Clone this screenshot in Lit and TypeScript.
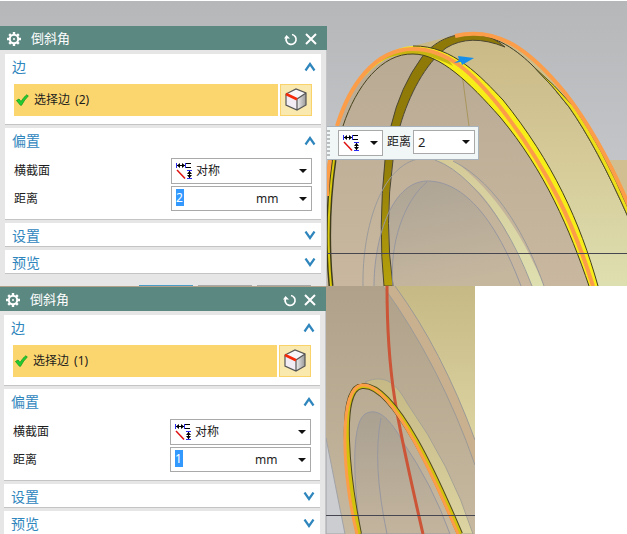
import { LitElement, html, css, svg, nothing } from "lit";
import { customElement, property } from "lit/decorators.js";

const dimensionIcon = html`<svg class="dim" width="17" height="18" viewBox="0 0 17 18" aria-hidden="true">
  <path d="M.5 1v5M9.500 1v5M11 8.500h5M11 16.500h5" stroke="#2a2af0" fill="none"/>
  <path d="M1 3.500h8M10 1.500h5M10 5.500h5M13.500 9v7" stroke="#000" fill="none"/>
  <path d="M1 3.500l3-2.500v5zM9 3.500l-3-2.500v5zM13.500 9l-2.500 3h5zM13.500 16l-2.500-3h5z" fill="#000"/>
  <path d="M1 8l8 8.500" stroke="#e01010" stroke-width="1.500"/>
</svg>`;

const arrow = html`<svg class="arrow" width="8" height="4" viewBox="0 0 8 4" aria-hidden="true">
  <path d="M0 0h8L4 4z" fill="#111"/>
</svg>`;

const shared = css`
  * { box-sizing: border-box; }
  button, select, input { margin: 0; padding: 0; border: 0; background: none; font: inherit; color: inherit; border-radius: 0; }
  select { appearance: none; min-width: 0; }
  svg { display: block; flex: none; }
  .combo { display: flex; align-items: center; border: 1px solid #a9a9a9; background: #fff; }
  .combo .arrow { margin-right: 4px; }
`;

@customElement("chamfer-panel")
export class ChamferPanel extends LitElement {
  @property({ type: Number }) count = 1;
  @property({ type: Number }) distance = 1;
  @property({ type: Boolean }) footer = false;

  static styles = [shared, css`
    :host { display: block; width: 327px; position: relative; background: #e6e6e6; border-right: 1px solid #c4c4c6;
      font: 12px/18px "Noto Sans", "Noto Sans CJK SC", sans-serif; color: #1c1c1c; }
    .title { display: flex; align-items: center; height: 24px; margin-right: -1px; padding: 2px 10px 0 7px; background: #5b8881; color: #fff; }
    .title h2 { flex: 1; margin: 0 0 2px 10px; font-size: 13px; font-weight: 400; line-height: 22px; }
    .title button { margin-left: 7px; }
    .body { display: flex; flex-direction: column; gap: 3px; padding: 4px 5px 0; }
    .group { background: #fff; border-bottom: 1px solid #c4c4c4; }
    .group.open { padding-bottom: 8px; }
    :host(:not([footer])) .group:last-child { border-bottom: 0; }
    .head { display: flex; align-items: center; justify-content: space-between; width: 100%; height: 23px;
      padding: 2px 5px 0 7px; color: #2f86bd; font-size: 14px; line-height: 20px; text-align: left; }
    .open .head { margin-bottom: 7px; }
    .pick, .row { display: flex; padding: 0 9px; }
    .pick { gap: 2px; }
    .edge { flex: 1; display: flex; align-items: center; gap: 5px; height: 32px; padding-left: 2px; background: #fbd66f; }
    .cube { display: grid; place-items: center; width: 32px; height: 32px; border: 1px solid #fad26a; background: #fae9ae; }
    .row + .row { margin-top: 2px; }
    .row label { flex: 1; line-height: 25px; }
    .combo { width: 141px; height: 26px; padding-left: 4px; }
    .combo.value { height: 25px; }
    .combo select { flex: 1; align-self: stretch; }
    .dim { margin-right: 3px; }
    .value input { width: 8px; height: 17px; margin-right: 72px; background: #3399ff; color: #fff; align-self: start; margin-top: 2px; }
    .footer { display: flex; gap: 5px; height: 12px; padding: 11px 15px 0; justify-content: flex-end; overflow: hidden; }
    .footer button { width: 54px; height: 22px; border-top: 1px solid #a9a9a9; flex: none; }
    .footer .main { border-color: #4a9cc8; }
  `];

  private head(name: string, open: boolean) {
    return html`<button class="head" aria-expanded=${open ? "true" : "false"}>${name}
      <svg width="12" height="10" viewBox="0 0 12 10" aria-hidden="true">
        <path d=${open ? "M1.500 8.500L6 2l4.500 6.500" : "M1.500 .500L6 7l4.500-6.500"} fill="none" stroke="#2f86bd" stroke-width="2.200"/>
      </svg></button>`;
  }

  render() {
    return html`
      <header class="title">
        <svg width="14" height="14" viewBox="0 0 14 14" aria-hidden="true">
          <circle cx="7" cy="7" r="4.200" fill="none" stroke="#fff" stroke-width="2"/>
          <path d="M7 0v3M7 11v3M0 7h3M11 7h3M2.200 2.200l2 2M9.800 9.800l2 2M11.800 2.200l-2 2M4.200 9.800l-2 2" stroke="#fff" stroke-width="2.400"/>
          <circle cx="7" cy="7" r="1" fill="#fff"/>
        </svg>
        <h2>倒斜角</h2>
        <button aria-label="重置"><svg width="14" height="14" viewBox="0 0 14 14">
          <path d="M8 2.500a5 5 0 1 1-5.500 3" fill="none" stroke="#fff" stroke-width="1.700"/>
          <path d="M0 6.500L2.500 3 6 6.500z" fill="#fff"/></svg></button>
        <button aria-label="关闭"><svg width="12" height="12" viewBox="0 0 12 12">
          <path d="M1 1l10 10M11 1L1 11" stroke="#fff" stroke-width="2"/></svg></button>
      </header>
      <div class="body">
        <section class="group open">
          ${this.head("边", true)}
          <div class="pick">
            <div class="edge">
              <svg width="13" height="12" viewBox="0 0 13 12" aria-hidden="true">
                <path d="M0.500 6.500L3 5l2 2.500Q8 2.500 11 0.700L12.300 2Q8.500 5.500 5.500 11.300H4.500z" fill="#22cf32" stroke="#139a20" stroke-width=".8"/>
              </svg>
              <span>选择边</span><span>(${this.count})</span>
            </div>
            <button class="cube" aria-label="边">
              <svg width="24" height="24" viewBox="0 0 24 24">
                <defs><linearGradient id="side"><stop stop-color="#eee"/><stop offset="1" stop-color="#999"/></linearGradient></defs>
                <path d="M2 6l10-5 10 4-9 6z" fill="#f7f7fa"/><path d="M2 6l11 5v11L2 17z" fill="#f2edf5"/>
                <path d="M13 11l9-6v12l-9 5z" fill="url(#side)"/>
                <path d="M2 6l10-5 10 4v12l-9 5L2 17zM13 11v11M13 11l9-6" fill="none" stroke="#555" stroke-width="1.200"/>
                <path d="M2 6l11 5.200" stroke="#f52a08" stroke-width="2.600"/>
              </svg>
            </button>
          </div>
        </section>
        <section class="group open">
          ${this.head("偏置", true)}
          <div class="row"><label for="section">横截面</label>
            <div class="combo">${dimensionIcon}<select id="section"><option>对称</option></select>${arrow}</div></div>
          <div class="row"><label for="distance">距离</label>
            <div class="combo value"><input id="distance" .value=${String(this.distance)}>
              <select aria-label="mm"><option>mm</option></select>${arrow}</div></div>
        </section>
        <section class="group">${this.head("设置", false)}</section>
        <section class="group">${this.head("预览", false)}</section>
      </div>
      ${this.footer ? html`<div class="footer"><button class="main" aria-label="确定"></button>
        <button aria-label="应用"></button><button aria-label="取消"></button></div>` : nothing}
    `;
  }
}

const line = (d: string, color: string, width = 1) =>
  svg`<path d=${d} fill="none" stroke=${color} stroke-width=${width}/>`;

@customElement("app-root")
export class AppRoot extends LitElement {
  static styles = [shared, css`
    :host { display: block; background: #fff; font: 12px/18px "Noto Sans", "Noto Sans CJK SC", sans-serif; color: #222; }
    .shot { position: relative; overflow: hidden; }
    .wide { padding-top: 26px; }
    .narrow { max-width: 475px; padding-top: 1px; }
    .narrow chamfer-panel { margin-left: -1px; }
    .scene { position: absolute; inset: 0; width: 100%; height: 100%; }
    .float { position: absolute; left: 327px; top: 126px; display: flex; align-items: flex-start; height: 34px;
      padding: 3px 3px 0 0; background: #f1f6f7; border: 1px solid #a8b2bc; border-left: 0; }
    .grip { width: 3px; height: 28px; margin-right: 8px; background: repeating-linear-gradient(#b8bcbe 0 2px, #f1f6f7 2px 4px); }
    .float .combo { height: 26px; }
    .mode { width: 45px; padding: 0 0 0 4px; justify-content: space-between; }
    .float label { margin: 0 2px 0 4px; line-height: 24px; }
    .float .amount { width: 62px; height: 24px; padding-left: 4px; }
    .amount input { flex: 1; width: 20px; font-size: 13px; }
  `];

  private upperScene() {
    return html`<svg class="scene" viewBox="0 0 627 286" preserveAspectRatio="xMinYMin slice" aria-hidden="true">
      <defs>
        <linearGradient id="sky" x2="0" y2="1"><stop stop-color="#b6b7b9"/><stop offset="1" stop-color="#cdcfd3"/></linearGradient>
        <linearGradient id="wall" gradientUnits="userSpaceOnUse" x1="0" y1="30" x2="0" y2="286"><stop stop-color="#c9b886"/><stop offset=".5" stop-color="#d5ca98"/><stop offset="1" stop-color="#dedfb0"/></linearGradient>
        <linearGradient id="face" gradientUnits="userSpaceOnUse" x1="0" y1="50" x2="0" y2="286"><stop stop-color="#b9aa94"/><stop offset="1" stop-color="#c9b89f"/></linearGradient>
        <linearGradient id="bore" gradientUnits="userSpaceOnUse" x1="420" y1="181" x2="440" y2="286"><stop stop-color="#aea596"/><stop offset="1" stop-color="#c5b69e"/></linearGradient>
        <linearGradient id="olive" gradientUnits="userSpaceOnUse" x1="0" y1="35" x2="0" y2="286"><stop stop-color="#8e7908"/><stop offset=".5" stop-color="#927d08"/><stop offset="1" stop-color="#b5a00b"/></linearGradient>
      </defs>
      <rect width="627" height="286" fill="url(#sky)"/>
      <rect width="627" height="1" fill="#fff"/>
      <path d="M608 160H627V286H590z" fill="#d2bf91"/>
      <path d="M413 46L455 35C505 22 535 59 563 93Q596 138 627 204V286H598Q520 90 413 46z" fill="url(#wall)"/>
      <path d="M327 286V165C342 90 378 48 413 48C449 48 474 75 500 107C549 170 574 225 593 286z" fill="url(#face)"/>
      <path d="M435 160L453 160Q508 200 544 286H532Q498 205 470 184Q452 166 435 160z" fill="url(#wall)"/>
      <path d="M374 286C374 242 390 182 427 181C470 181 501 233 521 286z" fill="url(#bore)"/>
      <path d="M384 286Q378 228 385 160Q386 142 391 126Q400 87 422 57C437 38 457 32 480 34Q492 36 505 47Q470 33 446 48C425 64 409 95 400 126Q396 143 393 160Q384 224 393 286z" fill="url(#olive)" stroke="#4c4735"/>
      ${line("M461 66L469 126", "#a9965d")}
      ${line("M363 286C362 227 382 160 425 158M435 160Q452 166 470 184Q506 219 532 286M453 161C499 184 528 241 544 286", "#9b9b9b")}
      ${line("M374 286C374 242 390 182 427 181C470 181 501 233 521 286M393 286C389 244 404 201 427 182", "#9797a0")}
      <path d="M413 46C453 45 482 78 503 100C553 162 580 222 598 286H589C570 230 545 171 500 117C469 82 440 54 413 53C384 54 372 68 362 80Q385 47 413 46z" fill="#f7ed18"/>
      <path d="M362 80C373 64 386 54 413 54C430 54 446 63 453 66L447 58Q424 45 400 50Q377 55 362 80z" fill="#c7b611"/>
      ${line("M413 46C453 45 482 78 503 100C553 162 580 222 598 286", "#45421c")}
      ${line("M343 126C356 86 382 53 413 54C440 54 469 82 500 117C545 171 570 230 589 286", "#45421c")}
      ${line("M334 160Q325 223 331 286", "#3f3c1e", 5)}
      ${line("M334 160Q325 223 331 286", "#d9c90d", 2)}
      ${line("M330 160Q327 178 327 196", "#fb9d49", 4)}
      ${line("M337 126C349 87 374 49 413 49C449 49 474 75 500 107C549 170 574 225 593 286", "#fb9d49", 4)}
      ${line("M467 34C496 34 518 51 534 67Q554 87 569 107Q597 147 628 217", "#3f3c26")}
      <path d="M534 67Q554 87 569 107Q597 147 628 217V208Q602 147 574 107Q555 85 534 67z" fill="#eadf18" stroke="#57532c"/>
      ${line("M455 36C503 24 538 60 565 93Q600 138 629 206", "#fb9d49", 4)}
      <path d="M458 56L474 58 462 65 461 62 454 63 459 60z" fill="#168fea"/>
      <path d="M0 253.500H627" stroke="#454650"/>
    </svg>`;
  }

  private lowerScene() {
    return html`<svg class="scene" viewBox="0 286 475 248" preserveAspectRatio="xMinYMin slice" aria-hidden="true">
      <defs>
        <linearGradient id="face2" x2="0" y2="1"><stop stop-color="#b0a28a"/><stop offset="1" stop-color="#c7b8a0"/></linearGradient>
        <linearGradient id="wall2" x2="0" y2="1"><stop stop-color="#c6b985"/><stop offset="1" stop-color="#dcd4a2"/></linearGradient>
        <linearGradient id="bore2" x2="0" y2="1"><stop stop-color="#aaa192"/><stop offset="1" stop-color="#c3b49d"/></linearGradient>
      </defs>
      <rect y="286" width="475" height="248" fill="url(#face2)"/>
      <path d="M326 438L345 534H326z" fill="#cbcdd0" stroke="#a1a2a5"/>
      <path d="M383 286Q440 365 475 465V440Q442 350 395 286z" fill="#c9b190"/>
      <path d="M395 286Q442 350 475 440V286z" fill="url(#wall2)"/>
      ${line("M383 286Q440 365 475 465M395 286Q442 350 475 440", "#9c9a96")}
      <path d="M365 382C386 373 397 385 407 403Q451 465 473 534H460Q400 398 365 382z" fill="url(#wall2)" stroke="#a5a195"/>
      <path d="M361 534C354 490 350 424 365 414C379 406 391 421 403 442Q432 484 450 534z" fill="url(#bore2)" stroke="#9797a0"/>
      ${line("M387 534Q372 463 381 418", "#9797a0")}
      ${line("M387 286C387 380 397 420 423 534", "#cc5437", 3)}
      ${line("M359 534C348 480 337 388 362 386C395 382 440 487 460 534", "#4f4920", 6)}
      ${line("M359 534C348 480 337 388 362 386C395 382 440 487 460 534", "#d3c20d", 4)}
      ${line("M357 534C343 480 337 388 362 385C393 382 439 490 458 534", "#fb9d49", 3)}
      <path d="M0 515.500H475" stroke="#454650"/>
    </svg>`;
  }

  render() {
    return html`
      <section class="shot wide">
        ${this.upperScene()}
        <chamfer-panel count="2" distance="2" footer></chamfer-panel>
        <div class="float">
          <span class="grip"></span>
          <button class="combo mode" aria-label="对称">${dimensionIcon}${arrow}</button>
          <label for="amount">距离</label>
          <div class="combo amount"><input id="amount" value="2">${arrow}</div>
        </div>
      </section>
      <section class="shot narrow">
        ${this.lowerScene()}
        <chamfer-panel count="1" distance="1"></chamfer-panel>
      </section>
    `;
  }
}
